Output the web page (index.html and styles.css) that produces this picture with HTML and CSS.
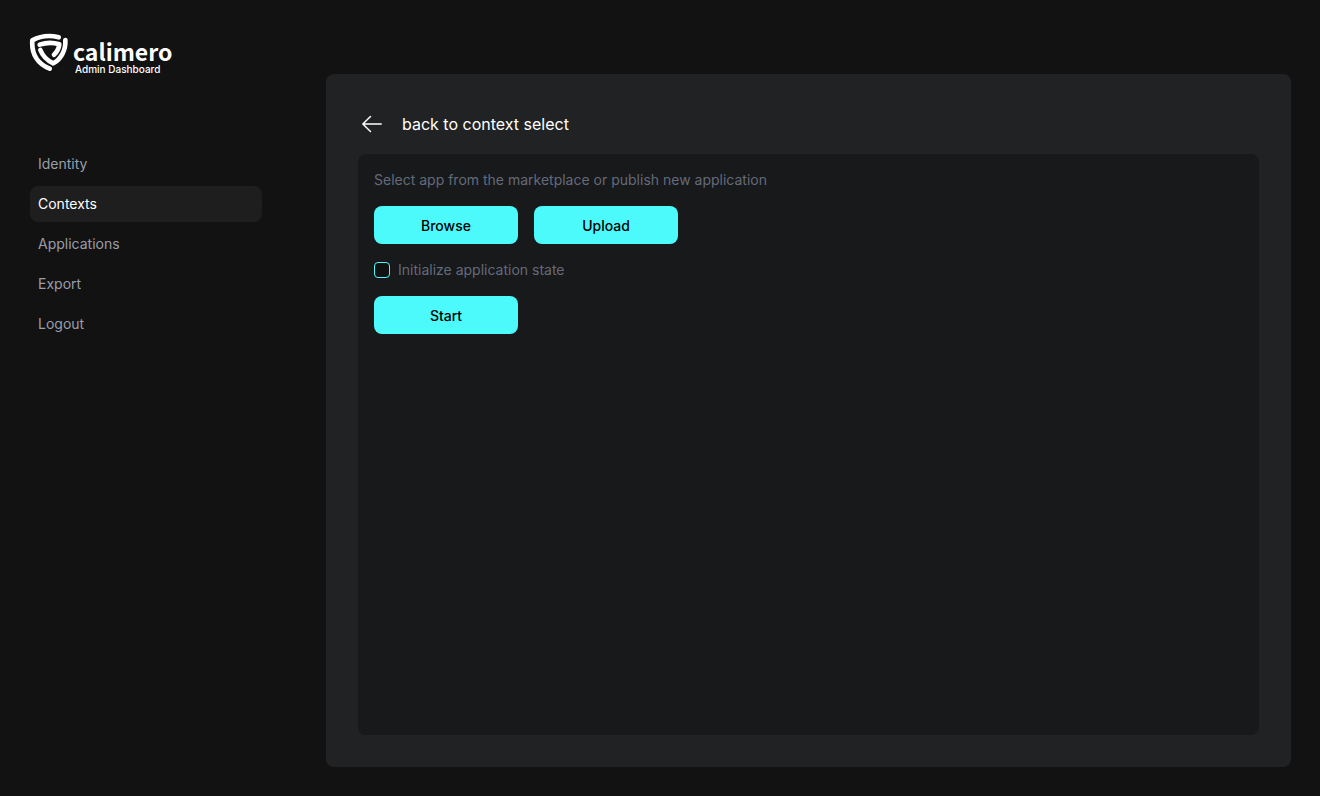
FILE: index.html
```html
<!DOCTYPE html>
<html lang="en">
<head>
<meta charset="utf-8">
<title>Calimero Admin Dashboard</title>
<link rel="stylesheet" href="styles.css">
</head>
<body>
<div class="layout">
  <aside class="sidebar">
    <div class="brand">
      <svg class="brand-mark" viewBox="15 15 120 114" fill="none" stroke="#fff" stroke-width="14" stroke-linecap="round" stroke-linejoin="round" aria-hidden="true">
        <path d="M104 28C77 21 47 25 25 37C22 78 41 108 77 122"/>
        <path d="M124 36C126 66 111 93 88 106C70 98 56 84 49 66"/>
        <path d="M47 50C67 43 88 43 106 49C104 63 98 73 90 80"/>
      </svg>
      <div class="brand-text">
        <span class="brand-name">calimero</span>
        <span class="brand-sub">Admin Dashboard</span>
      </div>
    </div>
    <nav class="nav">
      <a class="nav-item" href="#identity">Identity</a>
      <a class="nav-item active" href="#contexts" aria-current="page">Contexts</a>
      <a class="nav-item" href="#applications">Applications</a>
      <a class="nav-item" href="#export">Export</a>
      <a class="nav-item" href="#logout">Logout</a>
    </nav>
  </aside>
  <main class="panel">
    <a class="back" href="#contexts">
      <svg class="back-icon" viewBox="0 0 28 28" fill="none" stroke="#fff" stroke-width="1.5" stroke-linecap="round" stroke-linejoin="round" aria-hidden="true">
        <path d="M12.500 6.500L4.800 14L12.500 21.500M4.800 14H23.200"/>
      </svg>
      <span>back to context select</span>
    </a>
    <section class="card">
      <p class="hint">Select app from the marketplace or publish new application</p>
      <div class="actions">
        <button class="button" type="button">Browse</button>
        <button class="button" type="button">Upload</button>
      </div>
      <label class="check" for="init-state">
        <input class="check-box" type="checkbox" id="init-state">
        Initialize application state
      </label>
      <button class="button" type="button">Start</button>
    </section>
  </main>
</div>
</body>
</html>
```
FILE: styles.css
```css
* {
  box-sizing: border-box;
}

body {
  margin: 0;
  background: #121212;
  color: #fff;
  font-family: Inter, sans-serif;
  font-size: 14px;
  font-weight: 400;
  line-height: 20px;
}

a {
  color: inherit;
  text-decoration: none;
}

.layout {
  display: flex;
  gap: 64px;
  min-height: 100vh;
  padding: 32px 29px 29px 30px;
}

.sidebar {
  flex: none;
  width: 232px;
}

.brand {
  display: flex;
  gap: 4px;
  height: 44px;
}

.brand-mark {
  flex: none;
  width: 40px;
  height: 38px;
  margin: 1px 0 0 -1px;
}

.brand-text {
  display: flex;
  flex-direction: column;
  padding-top: 7px;
}

.brand-name {
  font-family: "Noto Sans CJK JP", "Noto Sans", sans-serif;
  font-size: 23px;
  font-weight: 700;
  line-height: 24px;
}

.brand-sub {
  padding-left: 2px;
  font-size: 10px;
  font-weight: 500;
  line-height: 12px;
}

.nav {
  display: flex;
  flex-direction: column;
  gap: 4px;
  margin-top: 70px;
}

.nav-item {
  padding: 8px;
  border-radius: 8px;
  color: #9a9da8;
}

.nav-item.active {
  background: #1e1e1e;
  color: #fff;
}

.panel {
  flex: 1;
  display: flex;
  flex-direction: column;
  gap: 16px;
  margin-top: 42px;
  padding: 36px 32px 32px;
  border-radius: 8px;
  background: #212224;
}

.back {
  display: flex;
  align-items: center;
  align-self: flex-start;
  gap: 16px;
  font-size: 16px;
}

.back-icon {
  width: 28px;
  height: 28px;
}

.card {
  flex: 1;
  display: flex;
  flex-direction: column;
  align-items: flex-start;
  gap: 16px;
  padding: 16px;
  border-radius: 8px;
  background: #17191b;
}

.hint,
.check {
  margin: 0;
  color: #656a79;
}

.actions {
  display: flex;
  gap: 16px;
}

.button {
  width: 144px;
  padding: 10px 16px 8px;
  border: 0;
  border-radius: 8px;
  background: #4cfafc;
  color: #000;
  font: inherit;
  font-weight: 500;
  cursor: pointer;
}

.check {
  display: flex;
  align-items: center;
  gap: 8px;
}

.check-box {
  appearance: none;
  width: 16px;
  height: 16px;
  margin: 0;
  border: 1px solid #4cfafc;
  border-radius: 4px;
  background: #121212;
}

.check-box:checked {
  background: #4cfafc;
}
```
